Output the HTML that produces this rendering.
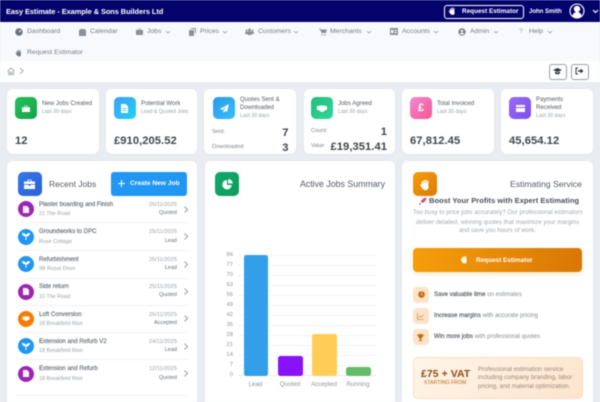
<!DOCTYPE html>
<html><head><meta charset="utf-8"><style>
html,body{margin:0;padding:0;width:600px;height:402px;overflow:hidden;background:#e9ecf1}
#r{position:relative;width:600px;height:402px;overflow:hidden;font-family:"Liberation Sans",sans-serif;filter:blur(.4px)}
#r div,#r svg{position:absolute}
.t{position:absolute;white-space:nowrap;line-height:10px;height:10px;margin-top:-5px}
.n{font-size:6.8px;color:#757c85}
.c{background:#fff;border-radius:6px;box-shadow:0 1px 3px rgba(0,0,0,.03)}
.i{border-radius:5px;display:flex;align-items:center;justify-content:center}
.h{font-size:6.1px;color:#555b63}
.s{font-size:5.2px;color:#999fa6}
.v{font-size:11.2px;font-weight:700;color:#41464d;letter-spacing:.05px}
.l{font-size:5.6px;color:#7d8289}
.jt{font-size:6.1px;color:#666c73;-webkit-text-stroke:.15px #666c73}
.js{font-size:5.4px;color:#9a9fa5}
.jd{font-size:5.7px;color:#9a9fa5;text-align:right;right:423px}
.jq{font-size:5.5px;color:#666c73;text-align:right;right:423px}
.dv{left:20px;width:168px;height:1px;background:#f1f2f4}
.ci{width:16px;height:16px;border-radius:50%;left:17.5px}
.g{left:238px;width:138px;height:1px;background:#f1f3f5}
.y{font-size:5.8px;color:#8e9399;text-align:right;right:367px}
.x{font-size:6.2px;color:#8e9399;text-align:center;width:40px}
.b{border-radius:2.5px}
.fi{left:413px;width:16px;height:16px;border-radius:4px;background:#fde3c9}
.ft{font-size:6.1px;color:#868b92}
.ft b{color:#5f646b;font-weight:400;-webkit-text-stroke:.2px #5f646b}
</style></head><body><div id="r">
<div style="left:0;top:0;width:600px;height:22px;background:#03036b"></div>
<div style="left:0;top:22px;width:600px;height:39px;background:#f8f9fc"></div>
<div style="left:0;top:61px;width:600px;height:21px;background:#fff"></div>

<span class="t" style="left:6px;top:11.5px;font-size:7.4px;font-weight:700;color:#fff;letter-spacing:-.06px">Easy Estimate - Example &amp; Sons Builders Ltd</span>
<div style="left:444px;top:4.5px;width:78px;height:12px;border:1px solid #fff;border-radius:3px"></div>
<svg style="left:448px;top:6px" width="9" height="10" viewBox="0 0 10 10"><path d="M2 5V2.500h1V4h.4V1.500h1V4h.4V1.300h1V4h.4V2h1v4.200C7.800 8 6.800 9.300 5 9.300 3.500 9.300 2.800 8.500 1.500 6.500L.8 5.200c.5-.5 1-.3 1.200-.2z" fill="#fff"/></svg>
<span class="t" style="left:462px;top:11.5px;font-size:6.4px;font-weight:700;color:#fff">Request Estimator</span>
<span class="t" style="left:529px;top:11.5px;font-size:6.1px;font-weight:700;color:#fff;letter-spacing:-.05px">John Smith</span>
<svg style="left:569px;top:3px" width="16" height="16" viewBox="0 0 16 16"><circle cx="8" cy="8" r="7" fill="#03036b" stroke="#fff" stroke-width="1.100"/><circle cx="8" cy="6" r="3.200" fill="#fff"/><path d="M3.500 13c.5-3 2.500-4 4.500-4s4 1 4.500 4c-2.500 2-6.500 2-9 0z" fill="#fff"/></svg>
<svg style="left:592px;top:8.500px" width="7" height="5" viewBox="0 0 7 5"><path d="M1 1l2.500 2.500L6 1" fill="none" stroke="#fff" stroke-width="1.200"/></svg>

<svg style="left:15px;top:28px" width="8" height="8" viewBox="0 0 8 8"><circle cx="4" cy="4" r="3.700" fill="#69717a"/><path d="M4 4L6 2.200" stroke="#fff" stroke-width="1"/></svg>
<span class="t n" style="left:27px;top:31.500px">Dashboard</span>
<svg style="left:79px;top:28px" width="7" height="8" viewBox="0 0 7 8"><path d="M0 2h7v6H0zM1 1h5v1H1z" fill="#8a9098"/></svg>
<span class="t n" style="left:90px;top:31.500px">Calendar</span>
<svg style="left:136px;top:28px" width="7" height="7" viewBox="0 0 7 7"><path d="M0 2h7v5H0zM2.200 .500h2.600V2H4.200V1.100H2.800V2h-.6z" fill="#8a9098"/></svg>
<span class="t n" style="left:147px;top:31.500px">Jobs</span>
<svg style="left:189px;top:28px" width="7" height="8" viewBox="0 0 7 8"><path d="M2 0h5v5H6V1H2zM0 2h5v6H0z" fill="#8a9098"/></svg>
<span class="t n" style="left:200px;top:31.500px">Prices</span>
<svg style="left:245px;top:28px" width="9" height="7" viewBox="0 0 9 7"><circle cx="4.500" cy="2" r="1.500" fill="#8a9098"/><circle cx="1.500" cy="2.500" r="1" fill="#8a9098"/><circle cx="7.500" cy="2.500" r="1" fill="#8a9098"/><path d="M0 6c0-2 1-2.500 1.500-2.500h6C8 3.500 9 4 9 6zM2.500 7c0-2.500 1-3 2-3s2 .5 2 3z" fill="#8a9098"/></svg>
<span class="t n" style="left:258px;top:31.500px">Customers</span>
<svg style="left:319px;top:28px" width="8" height="8" viewBox="0 0 8 8"><path d="M0 .500h1.500l.4 1H8l-1 3.500H2.500L1 1.200H0z" fill="#8a9098"/><circle cx="3" cy="6.800" r=".8" fill="#8a9098"/><circle cx="6" cy="6.800" r=".8" fill="#8a9098"/></svg>
<span class="t n" style="left:330px;top:31.500px">Merchants</span>
<svg style="left:390px;top:28px" width="8" height="7" viewBox="0 0 8 7"><path d="M0 0h8v7H0zM1 2v3h2.500V2zM4.500 2v1H7V2zM4.500 4v1H7V4z" fill="#8a9098" fill-rule="evenodd"/></svg>
<span class="t n" style="left:402px;top:31.500px">Accounts</span>
<svg style="left:458px;top:28px" width="8" height="8" viewBox="0 0 8 8"><circle cx="4" cy="4" r="3.700" fill="#7a818a"/><circle cx="4" cy="3" r="1.200" fill="#f8f9fc"/><path d="M1.800 6.500C2.200 5 3 4.800 4 4.800S5.800 5 6.200 6.500z" fill="#f8f9fc"/></svg>
<span class="t n" style="left:470px;top:31.500px">Admin</span>
<span class="t n" style="left:519px;top:31.500px;color:#a0a5ab">?</span>
<span class="t n" style="left:529px;top:31.500px">Help</span>
<svg style="left:15px;top:49px" width="8" height="8" viewBox="0 0 10 10"><path d="M2 5V2.500h1V4h.4V1.500h1V4h.4V1.300h1V4h.4V2h1v4.200C7.800 8 6.800 9.300 5 9.300 3.500 9.300 2.800 8.500 1.500 6.500L.8 5.200c.5-.5 1-.3 1.200-.2z" fill="#737a83"/></svg>
<span class="t n" style="left:27px;top:52.500px">Request Estimator</span>
<svg style="left:165px;top:29.500px" width="6" height="4" viewBox="0 0 6 4"><path d="M1 1l2 2 2-2" fill="none" stroke="#9aa0a6" stroke-width=".8"/></svg>
<svg style="left:222px;top:29.500px" width="6" height="4" viewBox="0 0 6 4"><path d="M1 1l2 2 2-2" fill="none" stroke="#9aa0a6" stroke-width=".8"/></svg>
<svg style="left:293px;top:29.500px" width="6" height="4" viewBox="0 0 6 4"><path d="M1 1l2 2 2-2" fill="none" stroke="#9aa0a6" stroke-width=".8"/></svg>
<svg style="left:366px;top:29.500px" width="6" height="4" viewBox="0 0 6 4"><path d="M1 1l2 2 2-2" fill="none" stroke="#9aa0a6" stroke-width=".8"/></svg>
<svg style="left:433px;top:29.500px" width="6" height="4" viewBox="0 0 6 4"><path d="M1 1l2 2 2-2" fill="none" stroke="#9aa0a6" stroke-width=".8"/></svg>
<svg style="left:493px;top:29.500px" width="6" height="4" viewBox="0 0 6 4"><path d="M1 1l2 2 2-2" fill="none" stroke="#9aa0a6" stroke-width=".8"/></svg>
<svg style="left:547px;top:29.500px" width="6" height="4" viewBox="0 0 6 4"><path d="M1 1l2 2 2-2" fill="none" stroke="#9aa0a6" stroke-width=".8"/></svg>

<svg style="left:7px;top:67px" width="8" height="8" viewBox="0 0 8 8"><path d="M.5 4L4 1l3.500 3M1.500 3.500V7.500h5V3.500M3.200 7.500V5h1.600v2.500" fill="none" stroke="#8d949b" stroke-width=".7"/></svg>
<svg style="left:19px;top:67px" width="5" height="8" viewBox="0 0 5 8"><path d="M1 1l3 3-3 3" fill="none" stroke="#8d949b" stroke-width=".8"/></svg>
<div style="left:549px;top:64px;width:16px;height:14px;border:1px solid #9a9fa5;border-radius:3px;background:#fff"></div>
<svg style="left:553px;top:67px" width="9" height="8" viewBox="0 0 9 8"><path d="M4.500 1L9 3 4.500 5 0 3z" fill="#33383f"/><path d="M2 4.500v2c1.500 1 3.500 1 5 0v-2L4.500 5.700z" fill="#33383f"/></svg>
<div style="left:571px;top:64px;width:16px;height:14px;border:1px solid #9a9fa5;border-radius:3px;background:#fff"></div>
<svg style="left:575px;top:67px" width="9" height="8" viewBox="0 0 9 8"><path d="M3 1H1v6h2" fill="none" stroke="#33383f" stroke-width="1"/><path d="M3 3.200h2.500V1.500L8.500 4 5.500 6.500V4.800H3z" fill="#33383f"/></svg>

<!-- stat cards -->
<div class="c" style="left:7px;top:89px;width:92px;height:65px"></div>
<div class="c" style="left:106px;top:89px;width:91px;height:65px"></div>
<div class="c" style="left:204px;top:89px;width:92px;height:65px"></div>
<div class="c" style="left:304px;top:89px;width:91px;height:65px"></div>
<div class="c" style="left:402px;top:89px;width:92px;height:65px"></div>
<div class="c" style="left:501px;top:89px;width:92px;height:65px"></div>

<div class="i" style="left:14.500px;top:97px;width:22px;height:22px;background:linear-gradient(135deg,#22c05c,#16a34a)"><svg width="8" height="7" viewBox="0 0 8 7" style="position:static"><path d="M0 2.200h8V7H0zM2.500 .500h3V2.200H5V1H3v1.200h-.5z" fill="#fff"/></svg></div>
<span class="t h" style="left:42px;top:104px">New Jobs Created</span>
<span class="t s" style="left:42px;top:112px">Last 30 days</span>
<span class="t v" style="left:15px;top:141px">12</span>

<div class="i" style="left:113.500px;top:97px;width:22px;height:22px;background:linear-gradient(135deg,#3b9ff8,#22d3ee)"><svg width="7" height="9" viewBox="0 0 7 9" style="position:static"><path d="M0 0h4.500L7 2.500V9H0zM1.500 4v.8h4V4zM1.500 6v.8h4V6z" fill="#fff" fill-rule="evenodd"/></svg></div>
<span class="t h" style="left:141px;top:104px">Potential Work</span>
<span class="t s" style="left:141px;top:112px">Lead &amp; Quoted Jobs</span>
<span class="t v" style="left:114px;top:141px">£910,205.52</span>

<div class="i" style="left:213px;top:97px;width:22px;height:22px;background:linear-gradient(135deg,#2a9be8,#38bdf8)"><svg width="9" height="9" viewBox="0 0 9 9" style="position:static"><path d="M9 0L0 5l2.300 1L7 2 3.300 6.500v2.500L5 7l2 .9z" fill="#fff"/></svg></div>
<span class="t h" style="left:240px;top:100px">Quotes Sent &amp;</span>
<span class="t h" style="left:240px;top:108px">Downloaded</span>
<span class="t s" style="left:240px;top:116px">Last 30 days</span>
<span class="t l" style="left:212px;top:132px">Sent:</span>
<span class="t v" style="right:311.500px;top:133px;letter-spacing:0">7</span>
<span class="t l" style="left:212px;top:147px">Downloaded:</span>
<span class="t v" style="right:311.500px;top:148px;letter-spacing:0">3</span>

<div class="i" style="left:311px;top:97px;width:22px;height:22px;background:linear-gradient(135deg,#1fbf7f,#34d399)"><svg width="10" height="7" viewBox="0 0 10 7" style="position:static"><path d="M0 1h2l1-.5h4L8 1h2v4H8.500L6 7H4.500L1.500 5H0z" fill="#fff"/></svg></div>
<span class="t h" style="left:338px;top:104px">Jobs Agreed</span>
<span class="t s" style="left:338px;top:112px">Last 30 days</span>
<span class="t l" style="left:311px;top:131px">Count:</span>
<span class="t v" style="right:213px;top:132px;letter-spacing:0">1</span>
<span class="t l" style="left:311px;top:146px;font-size:5.200px">Value:</span>
<span class="t v" style="right:213px;top:147px">£19,351.41</span>

<div class="i" style="left:410px;top:97px;width:22px;height:22px;background:linear-gradient(135deg,#f08ad8,#f7558a)"><span style="font-size:11px;font-weight:700;color:#fff;line-height:11px">£</span></div>
<span class="t h" style="left:437px;top:104px">Total Invoiced</span>
<span class="t s" style="left:437px;top:112px">Last 30 days</span>
<span class="t v" style="left:410px;top:141px">67,812.45</span>

<div class="i" style="left:509px;top:97px;width:22px;height:22px;background:linear-gradient(135deg,#9a6cf0,#7c4df0)"><svg width="9" height="7" viewBox="0 0 9 7" style="position:static"><path d="M0 0h9v2H0zM0 3h9v4H0z" fill="#fff"/></svg></div>
<span class="t h" style="left:536px;top:100px">Payments</span>
<span class="t h" style="left:536px;top:108px">Received</span>
<span class="t s" style="left:536px;top:116px">Last 30 days</span>
<span class="t v" style="left:509px;top:141px">45,654.12</span>

<!-- recent jobs -->
<div class="c" style="left:7px;top:161px;width:190px;height:250px"></div>
<div class="i" style="left:17.500px;top:172px;width:24px;height:24px;background:linear-gradient(135deg,#3478e8,#2d5fd8)"><svg width="11" height="10" viewBox="0 0 11 10" style="position:static"><path d="M0 2.500h11V5H0zM0 5.800h4.500v1h2v-1H11V10H0zM3.500 .5h4v2H6.800V1.200H4.200v1.300h-.7z" fill="#fff"/></svg></div>
<span class="t" style="left:49px;top:184px;font-size:8.500px;color:#555b63">Recent Jobs</span>
<div style="left:111px;top:172px;width:76px;height:24px;background:#2196f3;border-radius:3px"></div>
<svg style="left:118px;top:180px" width="7" height="7" viewBox="0 0 7 7"><path d="M3.500 0v7M0 3.500h7" stroke="#fff" stroke-width="1.100"/></svg>
<span class="t" style="left:130px;top:184px;font-size:6.600px;font-weight:700;color:#fff">Create New Job</span>

<div class="ci" style="top:201px;background:#9c27b0"></div><svg style="left:22.500px;top:205.500px" width="6" height="7" viewBox="0 0 6 7"><path d="M0 0h4l2 2v5H0z" fill="#fff" opacity=".95"/></svg>
<span class="t jt" style="left:39px;top:205px">Plaster boarding and Finish</span><span class="t js" style="left:39px;top:214px">21 The Road</span><span class="t jd" style="top:205px">25/11/2025</span><span class="t jq" style="top:213px">Quoted</span>
<svg style="left:184px;top:205.500px" width="4" height="7" viewBox="0 0 4 7"><path d="M.5.500l3 3-3 3" fill="none" stroke="#7d838a" stroke-width=".8"/></svg>
<div class="dv" style="top:222px"></div>

<div class="ci" style="top:228.500px;background:#2196f3"></div><svg style="left:21.500px;top:233px" width="8" height="7" viewBox="0 0 8 7"><path d="M0 0c2 0 3.500.5 4 2.200C4.500.5 6 0 8 0c0 2-1.500 3.500-3.500 3.500V7h-1V3.500C1.500 3.500 0 2 0 0z" fill="#fff"/></svg>
<span class="t jt" style="left:39px;top:232px">Groundworks to DPC</span><span class="t js" style="left:39px;top:241.500px">Rose Cottage</span><span class="t jd" style="top:232px">25/11/2025</span><span class="t jq" style="top:240.500px">Lead</span>
<svg style="left:184px;top:233px" width="4" height="7" viewBox="0 0 4 7"><path d="M.5.500l3 3-3 3" fill="none" stroke="#7d838a" stroke-width=".8"/></svg>
<div class="dv" style="top:250px"></div>

<div class="ci" style="top:256px;background:#2196f3"></div><svg style="left:21.500px;top:260.500px" width="8" height="7" viewBox="0 0 8 7"><path d="M0 0c2 0 3.500.5 4 2.200C4.500.5 6 0 8 0c0 2-1.500 3.500-3.500 3.500V7h-1V3.500C1.500 3.500 0 2 0 0z" fill="#fff"/></svg>
<span class="t jt" style="left:39px;top:259.500px">Refurbishment</span><span class="t js" style="left:39px;top:269px">9B Roost Drive</span><span class="t jd" style="top:259.500px">25/11/2025</span><span class="t jq" style="top:268px">Lead</span>
<svg style="left:184px;top:260.500px" width="4" height="7" viewBox="0 0 4 7"><path d="M.5.500l3 3-3 3" fill="none" stroke="#7d838a" stroke-width=".8"/></svg>
<div class="dv" style="top:277.500px"></div>

<div class="ci" style="top:283.500px;background:#9c27b0"></div><svg style="left:22.500px;top:288px" width="6" height="7" viewBox="0 0 6 7"><path d="M0 0h4l2 2v5H0z" fill="#fff" opacity=".95"/></svg>
<span class="t jt" style="left:39px;top:287px">Side return</span><span class="t js" style="left:39px;top:296.500px">10 The Road</span><span class="t jd" style="top:287px">25/11/2025</span><span class="t jq" style="top:295px">Quoted</span>
<svg style="left:184px;top:288px" width="4" height="7" viewBox="0 0 4 7"><path d="M.5.500l3 3-3 3" fill="none" stroke="#7d838a" stroke-width=".8"/></svg>
<div class="dv" style="top:304.500px"></div>

<div class="ci" style="top:310.500px;background:#f57c00"></div><svg style="left:20.500px;top:316px" width="10" height="5" viewBox="0 0 10 7"><path d="M0 1h2l1-.5h4L8 1h2v4H8.500L6 7H4.500L1.500 5H0z" fill="#fff"/></svg>
<span class="t jt" style="left:39px;top:314.500px">Loft Conversion</span><span class="t js" style="left:39px;top:323.500px">18 Breakfield Rise</span><span class="t jd" style="top:314.500px">25/11/2025</span><span class="t jq" style="top:322.500px">Accepted</span>
<svg style="left:184px;top:315px" width="4" height="7" viewBox="0 0 4 7"><path d="M.5.500l3 3-3 3" fill="none" stroke="#7d838a" stroke-width=".8"/></svg>
<div class="dv" style="top:332px"></div>

<div class="ci" style="top:338px;background:#2196f3"></div><svg style="left:21.500px;top:342.500px" width="8" height="7" viewBox="0 0 8 7"><path d="M0 0c2 0 3.500.5 4 2.200C4.500.5 6 0 8 0c0 2-1.500 3.500-3.500 3.500V7h-1V3.500C1.500 3.500 0 2 0 0z" fill="#fff"/></svg>
<span class="t jt" style="left:39px;top:341.500px">Extension and Refurb V2</span><span class="t js" style="left:39px;top:351px">18 Breakfield Rise</span><span class="t jd" style="top:341.500px">24/11/2025</span><span class="t jq" style="top:350px">Lead</span>
<svg style="left:184px;top:342.500px" width="4" height="7" viewBox="0 0 4 7"><path d="M.5.500l3 3-3 3" fill="none" stroke="#7d838a" stroke-width=".8"/></svg>
<div class="dv" style="top:359px"></div>

<div class="ci" style="top:365.500px;background:#9c27b0"></div><svg style="left:22.500px;top:370px" width="6" height="7" viewBox="0 0 6 7"><path d="M0 0h4l2 2v5H0z" fill="#fff" opacity=".95"/></svg>
<span class="t jt" style="left:39px;top:369px">Extension and Refurb</span><span class="t js" style="left:39px;top:378.500px">18 Breakfield Rise</span><span class="t jd" style="top:369px">12/11/2025</span><span class="t jq" style="top:377.500px">Quoted</span>
<svg style="left:184px;top:370px" width="4" height="7" viewBox="0 0 4 7"><path d="M.5.500l3 3-3 3" fill="none" stroke="#7d838a" stroke-width=".8"/></svg>
<div class="dv" style="top:395px;left:16px;width:172px"></div>

<!-- chart -->
<div class="c" style="left:205px;top:161px;width:190px;height:250px"></div>
<div class="i" style="left:215px;top:172px;width:24px;height:24px;background:linear-gradient(135deg,#10a870,#0f9d58)"><svg width="11" height="11" viewBox="0 0 11 11" style="position:static"><path d="M5 1a4.700 4.700 0 1 0 4.700 5H5z" fill="#fff"/><path d="M6.200 0a4.500 4.500 0 0 1 4.500 4.500H6.200z" fill="#fff"/></svg></div>
<span class="t" style="right:215px;top:184px;font-size:8.800px;color:#555b63">Active Jobs Summary</span>

<div class="g" style="top:255px"></div><div class="g" style="top:265px"></div><div class="g" style="top:275px"></div><div class="g" style="top:285px"></div><div class="g" style="top:295px"></div><div class="g" style="top:305px"></div><div class="g" style="top:315px"></div><div class="g" style="top:325px"></div><div class="g" style="top:335px"></div><div class="g" style="top:345px"></div><div class="g" style="top:355px"></div><div class="g" style="top:365px"></div><div class="g" style="top:375px;background:#e4e7ea"></div>
<span class="t y" style="top:255px">84</span><span class="t y" style="top:265px">77</span><span class="t y" style="top:275px">70</span><span class="t y" style="top:285px">63</span><span class="t y" style="top:295px">56</span><span class="t y" style="top:305px">49</span><span class="t y" style="top:315px">42</span><span class="t y" style="top:325px">35</span><span class="t y" style="top:335px">28</span><span class="t y" style="top:345px">21</span><span class="t y" style="top:355px">14</span><span class="t y" style="top:365px">7</span><span class="t y" style="top:375px">0</span>
<div class="b" style="left:243.500px;top:255px;width:24.500px;height:120.500px;background:#339fe8"></div>
<div class="b" style="left:278px;top:355.500px;width:24.500px;height:20px;background:#8a12fb"></div>
<div class="b" style="left:312px;top:334px;width:24.500px;height:41.500px;background:#ffcd56"></div>
<div class="b" style="left:346px;top:367px;width:24.500px;height:8.500px;background:#66bb6a"></div>
<span class="t x" style="left:235.500px;top:384.500px">Lead</span><span class="t x" style="left:270px;top:384.500px">Quoted</span><span class="t x" style="left:304px;top:384.500px">Accepted</span><span class="t x" style="left:338px;top:384.500px">Running</span>

<!-- estimating -->
<div class="c" style="left:402px;top:161px;width:191px;height:250px"></div>
<div class="i" style="left:413px;top:172px;width:24px;height:24px;background:linear-gradient(135deg,#f59e0b,#dd7a08)"><svg width="13" height="13" viewBox="0 0 10 10" style="position:static"><path d="M2 5V2.500h1V4h.4V1.500h1V4h.4V1.300h1V4h.4V2h1v4.200C7.800 8 6.800 9.300 5 9.300 3.500 9.300 2.800 8.500 1.500 6.500L.8 5.200c.5-.5 1-.3 1.200-.2z" fill="#fff"/></svg></div>
<span class="t" style="right:18px;top:184px;font-size:8.700px;color:#555b63">Estimating Service</span>
<svg style="left:418px;top:196.500px" width="9" height="9" viewBox="0 0 9 9"><path d="M8.500.500C6 .8 3.800 2.400 3 4.500L4.500 6C6.600 5.200 8.200 3 8.500.500z" fill="#d8408a"/><path d="M1 8c0-1.200.6-2 1.500-2.200l.7.700C3 7.400 2.200 8 1 8z" fill="#e8763a"/><path d="M2 4.500l1.500-1L3 5zM4 7l1-1.500L4.500 6z" fill="#8aa0c8"/></svg>
<span class="t" style="left:429px;top:201px;font-size:7.500px;font-weight:700;color:#4b5058;letter-spacing:.04px">Boost Your Profits with Expert Estimating</span>
<span class="t" style="left:413px;width:169px;text-align:center;top:213px;font-size:6.100px;color:#a3a8ae;letter-spacing:.03px">Too busy to price jobs accurately? Our professional estimators</span>
<span class="t" style="left:413px;width:169px;text-align:center;top:222.500px;font-size:6.100px;color:#a3a8ae;letter-spacing:.03px">deliver detailed, winning quotes that maximize your margins</span>
<span class="t" style="left:413px;width:169px;text-align:center;top:231px;font-size:6.100px;color:#a3a8ae;letter-spacing:.03px">and save you hours of work.</span>
<div style="left:413px;top:248px;width:169px;height:24px;border-radius:4px;background:linear-gradient(90deg,#f59e0b,#d97706);box-shadow:0 2px 4px rgba(245,158,11,.22)"></div>
<svg style="left:460px;top:255px" width="9" height="9" viewBox="0 0 10 10"><path d="M2 5V2.500h1V4h.4V1.500h1V4h.4V1.300h1V4h.4V2h1v4.200C7.800 8 6.800 9.300 5 9.300 3.500 9.300 2.800 8.500 1.500 6.500L.8 5.200c.5-.5 1-.3 1.200-.2z" fill="#fff"/></svg>
<span class="t" style="left:476px;top:261px;font-size:6.400px;font-weight:700;color:#fff">Request Estimator</span>

<div class="fi" style="top:286.500px"></div><svg style="left:417.500px;top:291px" width="7" height="7" viewBox="0 0 7 7"><circle cx="3.500" cy="3.500" r="3.300" fill="#c96a0c"/><path d="M3.500 1.500v2l1.400.8" fill="none" stroke="#fde3c9" stroke-width=".7"/></svg>
<span class="t ft" style="left:434px;top:294.500px"><b>Save valuable time</b> on estimates</span>
<div class="fi" style="top:308px"></div><svg style="left:417px;top:312.500px" width="7" height="7" viewBox="0 0 7 7"><path d="M.5 0v6.500H7M1.800 4.500L3.200 3l1.200 1L6.500 2" fill="none" stroke="#d9914e" stroke-width=".8"/></svg>
<span class="t ft" style="left:434px;top:316px"><b>Increase margins</b> with accurate pricing</span>
<div class="fi" style="top:329px"></div><svg style="left:417px;top:333.500px" width="7" height="7" viewBox="0 0 7 7"><path d="M1.500 0h4v2.500c0 1.300-.8 2-1.500 2.200V6H5.200v1H1.800V6H3V4.700C2.300 4.500 1.500 3.800 1.500 2.500zM0 .8h1.300v1.800C.500 2.500 0 1.800 0 .8zM7 .8H5.700v1.800C6.500 2.500 7 1.800 7 .8z" fill="#c96a0c"/></svg>
<span class="t ft" style="left:434px;top:337px"><b>Win more jobs</b> with professional quotes</span>

<div style="left:413px;top:357px;width:168px;height:40px;border:1px solid #fcdcbd;border-radius:5px;background:linear-gradient(135deg,#fff5ea,#fde4cc)"></div>
<span class="t" style="left:421px;top:375px;font-size:10.400px;font-weight:700;color:#8f4a12;letter-spacing:.1px">£75 + VAT</span>
<span class="t" style="left:420px;width:50px;text-align:center;top:383px;font-size:5.200px;color:#b8691f">STARTING FROM</span>
<span class="t" style="left:478px;top:369.500px;font-size:6.200px;color:#9b8a7a">Professional estimation service</span>
<span class="t" style="left:478px;top:378px;font-size:6.200px;color:#9b8a7a">including company branding, labor</span>
<span class="t" style="left:478px;top:386.500px;font-size:6.200px;color:#9b8a7a">pricing, and material optimization.</span>
</div></body></html>
